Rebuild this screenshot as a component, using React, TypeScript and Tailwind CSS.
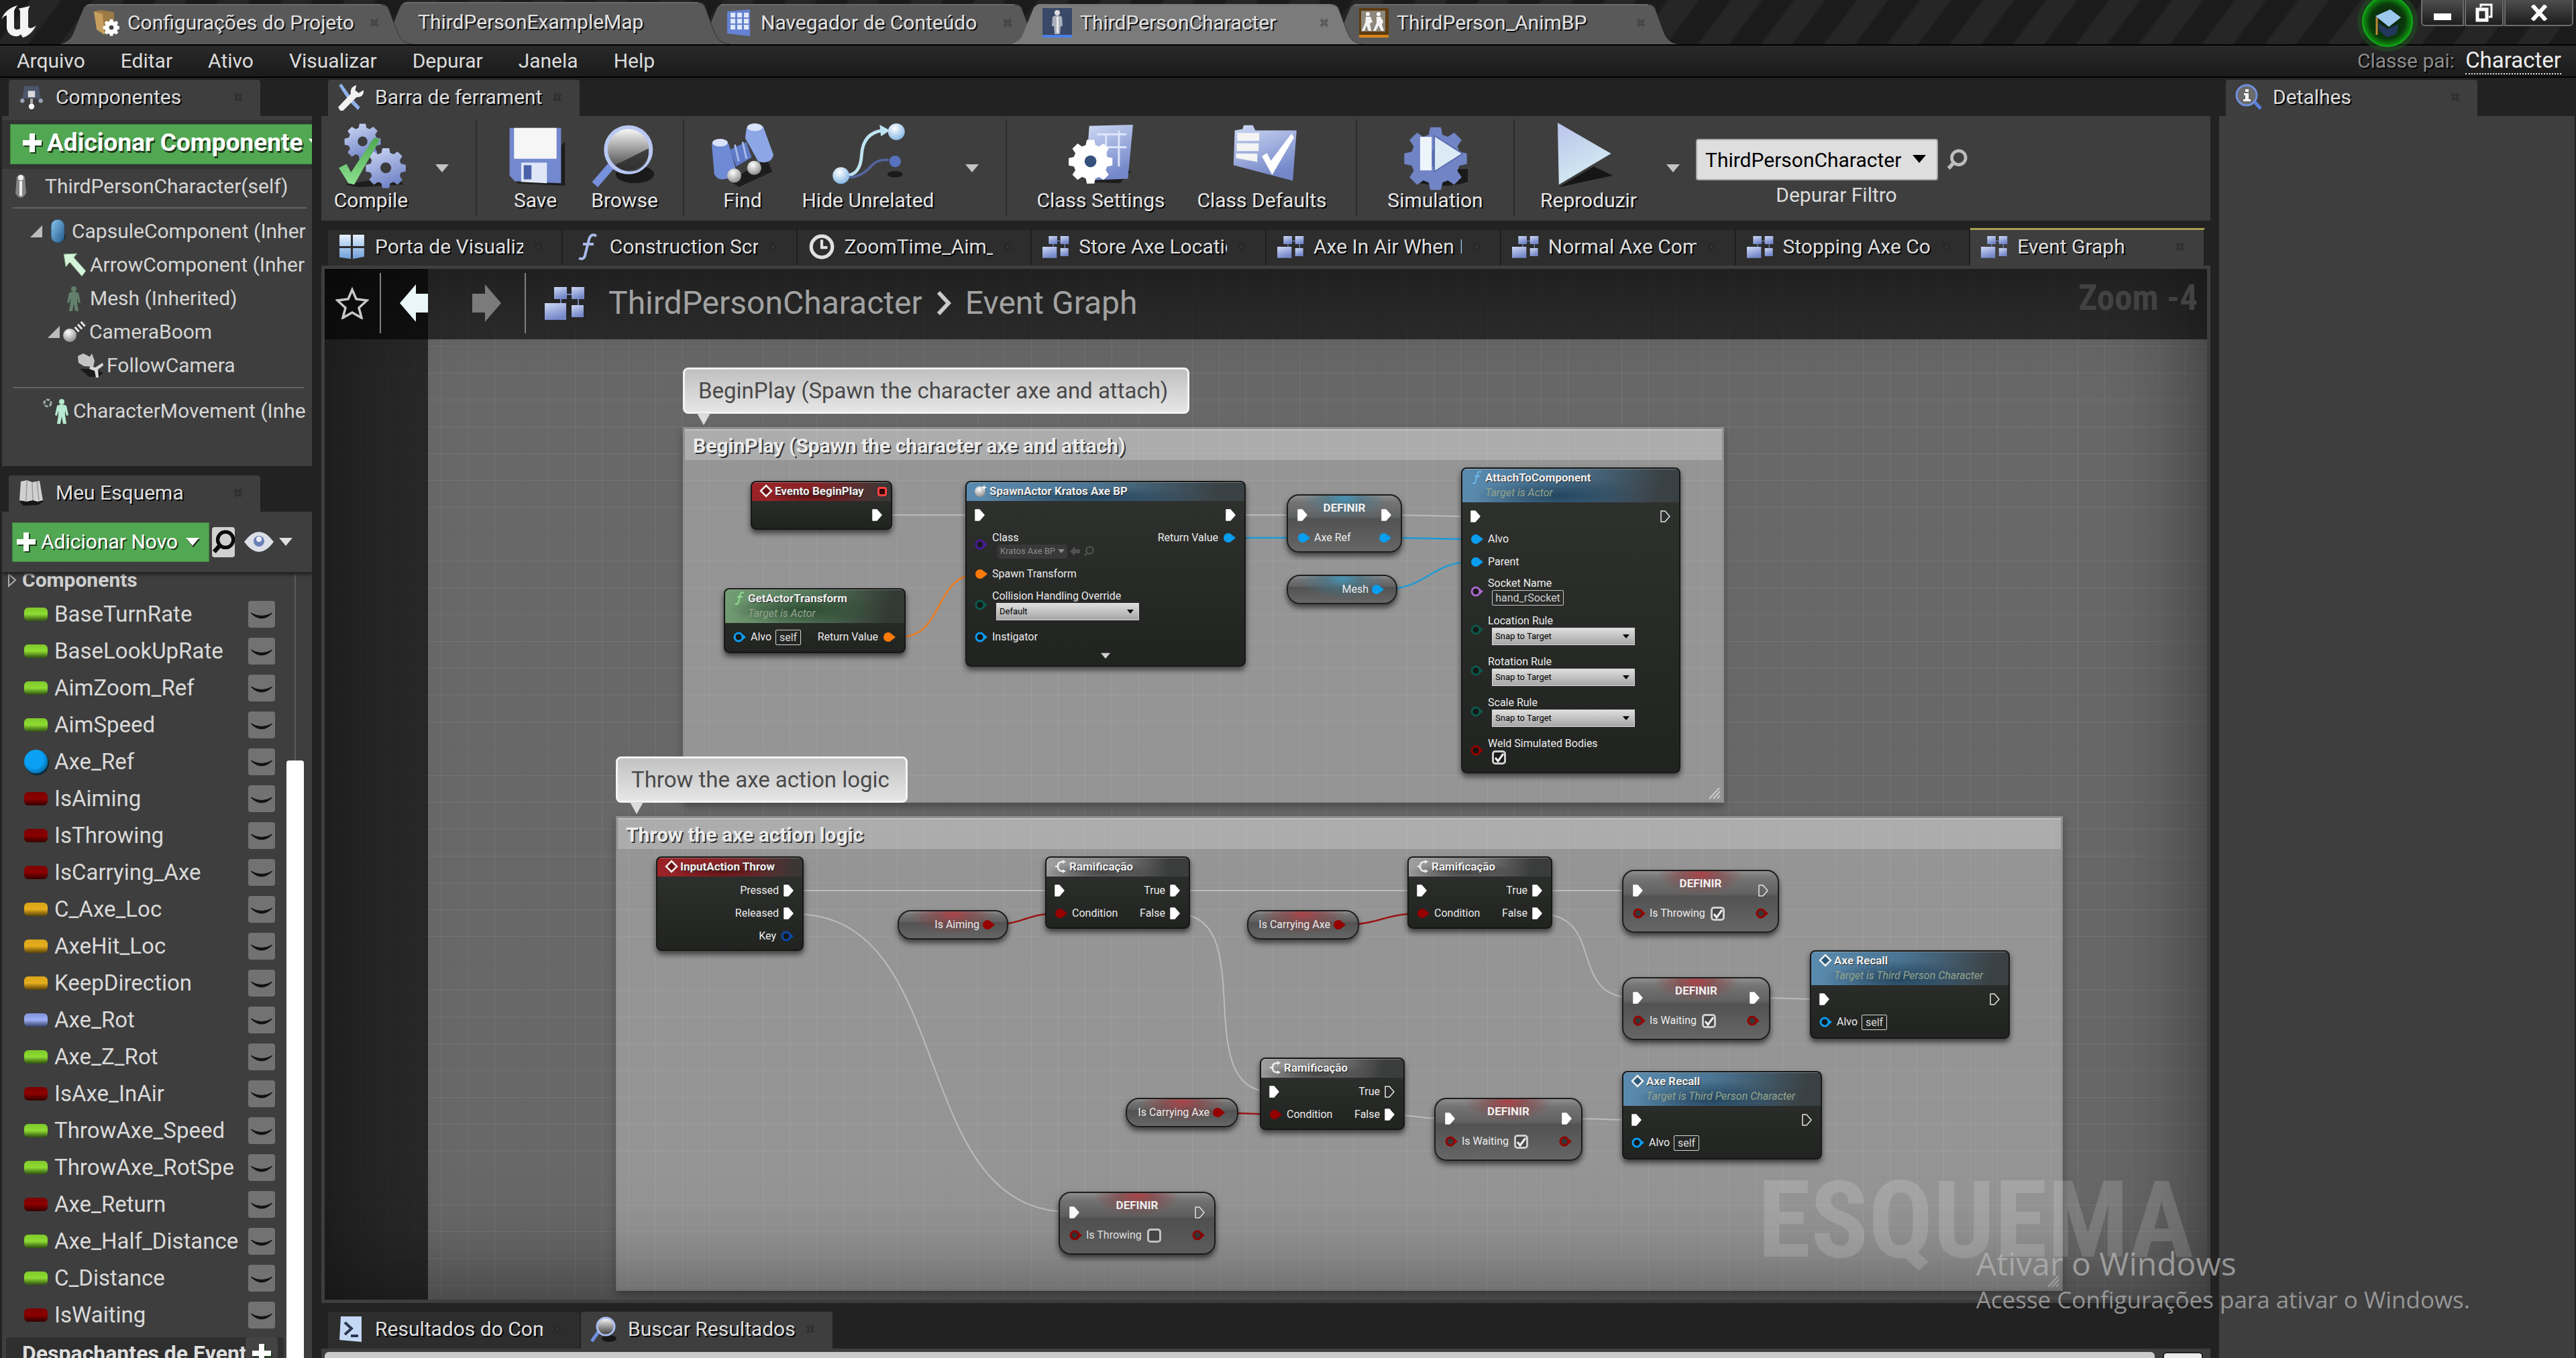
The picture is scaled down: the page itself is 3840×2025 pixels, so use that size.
import type { ReactNode } from "react";

/* ---------- shared gradients ---------- */

function Defs() {
  return (
    <svg className="absolute h-0 w-0" aria-hidden="true">
      <defs>
        <linearGradient id="steel" x1="0" y1="0" x2="0.4" y2="1">
          <stop offset="0" stopColor="#cfdaf5" />
          <stop offset="1" stopColor="#7487c9" />
        </linearGradient>
        <linearGradient id="pale" x1="0" y1="0" x2="0.4" y2="1">
          <stop offset="0" stopColor="#b9c3ea" />
          <stop offset="1" stopColor="#d5ecf3" />
        </linearGradient>
        <linearGradient id="leaf" x1="0" y1="0" x2="0" y2="1">
          <stop offset="0" stopColor="#4fa84f" />
          <stop offset="1" stopColor="#8be08f" />
        </linearGradient>
        <linearGradient id="chrome" x1="0" y1="0" x2="0" y2="1">
          <stop offset="0" stopColor="#ffffff" />
          <stop offset="0.5" stopColor="#9a9a9a" />
          <stop offset="1" stopColor="#3a3a3a" />
        </linearGradient>
        <linearGradient id="capsule" x1="0" y1="0" x2="1" y2="1">
          <stop offset="0" stopColor="#8cc7f0" />
          <stop offset="1" stopColor="#1f5a8c" />
        </linearGradient>
        <linearGradient id="window" x1="0" y1="0" x2="0" y2="1">
          <stop offset="0" stopColor="#e6f2ff" />
          <stop offset="1" stopColor="#6f9fd8" />
        </linearGradient>
        <radialGradient id="ball" cx="0.4" cy="0.3" r="0.8">
          <stop offset="0" stopColor="#ffffff" />
          <stop offset="1" stopColor="#77aee0" />
        </radialGradient>
        <radialGradient id="greyball" cx="0.4" cy="0.3" r="0.8">
          <stop offset="0" stopColor="#ffffff" />
          <stop offset="1" stopColor="#7f7f7f" />
        </radialGradient>
        <radialGradient id="glow" cx="0.5" cy="0.5" r="0.5">
          <stop offset="0" stopColor="#0c1f0c" />
          <stop offset="0.7" stopColor="#0b3a0b" />
          <stop offset="1" stopColor="#0f9a12" />
        </radialGradient>
      </defs>
    </svg>
  );
}

/* ---------- small icons ---------- */

type IconProps = { className?: string };

const gearPath =
  "M-5-24h10l1.500 7 5 2 6-4 7 7-4 6 2 5 7 1.500v10l-7 1.500-2 5 4 6-7 7-6-4-5 2-1.500 7h-10l-1.500-7-5-2-6 4-7-7 4-6-2-5-7-1.500v-10l7-1.500 2-5-4-6 7-7 6 4 5-2z";

function Gear({ x, y, s, fill, hole = "#3c3c3c" }: { x: number; y: number; s: number; fill: string; hole?: string }) {
  return (
    <g transform={`translate(${x} ${y}) scale(${s})`}>
      <path d={gearPath} fill={fill} transform="translate(0 -5)" />
      <circle cx="0" cy="0" r="8" fill={hole} />
    </g>
  );
}

function Cross({ className = "" }: IconProps) {
  return (
    <svg viewBox="0 0 16 16" className={`h-4 w-4 shrink-0 ${className}`} aria-hidden="true">
      <path d="M3 3l10 10M13 3L3 13" stroke="#1b1b1b" strokeWidth="4" />
      <path d="M3 3l10 10M13 3L3 13" stroke="#585858" strokeWidth="1" />
    </svg>
  );
}

function Down({ className = "" }: IconProps) {
  return (
    <svg viewBox="0 0 20 12" className={`shrink-0 ${className}`} aria-hidden="true">
      <path d="M0 0h20L10 12z" fill="currentColor" />
    </svg>
  );
}

function GraphIcon({ className = "h-9 w-10" }: IconProps) {
  return (
    <svg viewBox="0 0 60 50" className={`shrink-0 ${className}`} aria-hidden="true">
      <path d="M24 12h26M24 12v24M50 12v30" stroke="#7484bd" strokeWidth="2" />
      <rect x="14" y="1" width="19" height="18" fill="url(#steel)" />
      <rect x="40" y="1" width="19" height="18" fill="url(#steel)" />
      <rect x="0" y="25" width="32" height="25" fill="url(#steel)" />
      <rect x="40" y="28" width="18" height="18" fill="url(#steel)" />
    </svg>
  );
}

function FolderGear() {
  return (
    <svg viewBox="0 0 40 40" className="h-10 w-10 shrink-0" aria-hidden="true">
      <path d="M2 3l10-2 20 3v12l-16 22z" fill="#9b7a45" />
      <path d="M2 3l13 4 3 31L6 30z" fill="#c79e5d" />
      <Gear x={28} y={27} s={0.42} fill="#fff" hole="#444" />
    </svg>
  );
}

function GridIcon() {
  return (
    <svg viewBox="0 0 40 40" className="h-10 w-10 shrink-0" aria-hidden="true">
      <path d="M2 3l34-3v40L2 36z" fill="#6682d2" />
      {[5, 14, 23].map((y) =>
        [7, 17, 27].map((x) => <rect key={`${x}-${y}`} x={x} y={y} width="7" height="7" fill="#dfe7fb" />),
      )}
    </svg>
  );
}

function PersonTile() {
  return (
    <svg viewBox="0 0 44 44" className="h-11 w-11 shrink-0" aria-hidden="true">
      <rect width="44" height="44" fill="#3a4868" />
      <rect y="40" width="44" height="4" fill="#4a80e8" />
      <circle cx="22" cy="7" r="4" fill="#ddd" />
      <path d="M15 13q7-4 14 0l1 14h-3l-1 12h-8l-1-12h-3z" fill="#aab0bd" />
      <path d="M21 13h3v24h-3z" fill="#e8e8e8" />
    </svg>
  );
}

function AnimTile() {
  return (
    <svg viewBox="0 0 44 44" className="h-11 w-11 shrink-0" aria-hidden="true">
      <rect width="44" height="44" fill="#5d3c12" />
      <rect y="40" width="44" height="4" fill="#d8871a" />
      <rect x="3" y="4" width="36" height="31" fill="#8d877c" />
      <circle cx="13" cy="9" r="3" fill="#fff" />
      <circle cx="29" cy="9" r="3" fill="#fff" />
      <path d="M10 13h7l3 8-4 2 2 11h-4l-3-8-3 8H4l5-12zM26 13h6l4 7-2 5 3 9h-4l-4-8-4 8h-4l5-12z" fill="#f3f3f3" />
    </svg>
  );
}

function ComponentsIcon() {
  return (
    <svg viewBox="0 0 38 38" className="h-10 w-10 shrink-0" aria-hidden="true">
      <path d="M9 3h20l3 18H6z" fill="#4c566c" />
      <rect x="14" y="10" width="10" height="9" fill="#d9d9d9" />
      <circle cx="6" cy="24" r="3" fill="#9ba5b8" />
      <circle cx="32" cy="24" r="3" fill="#9ba5b8" />
      <path d="M17 21h4v7h-4z" fill="#aaa" />
      <circle cx="19" cy="32" r="4" fill="#fff" />
    </svg>
  );
}

function ToolsIcon() {
  return (
    <svg viewBox="0 0 38 38" className="h-10 w-10 shrink-0" aria-hidden="true">
      <path d="M2 2l4-2 14 20 12 13-3 4L16 24z" fill="#8fb0ea" />
      <path d="M4 38l-3-5 18-19q-2-9 8-12l-2 7 5 4 7-4q1 10-10 10L8 38z" fill="#f2f2f2" />
    </svg>
  );
}

function InfoLens() {
  return (
    <svg viewBox="0 0 40 40" className="h-10 w-10 shrink-0" aria-hidden="true">
      <path d="M28 26l10 11" stroke="#5d7fdc" strokeWidth="5" />
      <circle cx="17" cy="17" r="15" fill="#6a6a6a" stroke="#7090de" strokeWidth="3" />
      <path d="M15 8h5v4h-5zM13 14h7v9h3v3H12v-3h3v-6h-2z" fill="#f4f4f4" />
    </svg>
  );
}

function BookIcon() {
  return (
    <svg viewBox="0 0 40 40" className="h-10 w-10 shrink-0" aria-hidden="true">
      <path d="M2 33l6 6 22-1 8-6-8-4z" fill="#151515" />
      <path d="M4 3l9-2 8 3 11-2 5 29-8 2-7-2-9 2-11-2z" fill="#d0d0d0" />
      <path d="M13 1l-1 31M21 4l1 27M28 3l3 28" stroke="#9a9a9a" strokeWidth="1.500" />
    </svg>
  );
}

function ViewportIcon() {
  return (
    <svg viewBox="0 0 38 38" className="h-10 w-10 shrink-0" aria-hidden="true">
      <path d="M1 2h16v16H1zM20 2h16v16H20zM1 21h16v15L1 34zM20 21h16v12l-16 3z" fill="url(#window)" />
    </svg>
  );
}

function ScriptF({ className = "h-10 w-9", color = "#a9b9ea" }: IconProps & { color?: string }) {
  return (
    <svg viewBox="0 0 36 40" className={`shrink-0 ${className}`} aria-hidden="true">
      <path d="M32 4q-8-5-11 5l-6 24q-2 7-9 4M12 16h16" fill="none" stroke={color} strokeWidth="4" />
    </svg>
  );
}

function ClockIcon() {
  return (
    <svg viewBox="0 0 38 38" className="h-10 w-10 shrink-0" aria-hidden="true">
      <circle cx="19" cy="19" r="15" fill="none" stroke="#e0e0e0" strokeWidth="5" />
      <path d="M19 9v11h8" fill="none" stroke="#e0e0e0" strokeWidth="4" />
    </svg>
  );
}

function LensIcon({ className = "h-10 w-10" }: IconProps) {
  return (
    <svg viewBox="0 0 40 40" className={`shrink-0 ${className}`} aria-hidden="true">
      <ellipse cx="28" cy="34" rx="11" ry="5" fill="#161616" />
      <path d="M12 24L2 38" stroke="#6f8fdc" strokeWidth="5" />
      <circle cx="23" cy="16" r="13" fill="url(#chrome)" stroke="#a9bdf0" strokeWidth="3" />
    </svg>
  );
}

function ConsoleIcon() {
  return (
    <svg viewBox="0 0 38 40" className="h-10 w-10 shrink-0" aria-hidden="true">
      <path d="M4 1h31v38L2 36z" fill="#c3d8f5" />
      <path d="M10 10l10 9-10 9M19 30h11" fill="none" stroke="#2b3550" strokeWidth="4" />
    </svg>
  );
}

function SearchGlyph({ className = "", stroke = "#bdbdbd" }: IconProps & { stroke?: string }) {
  return (
    <svg viewBox="0 0 32 34" className={`shrink-0 ${className}`} aria-hidden="true">
      <circle cx="19" cy="14" r="11" fill="none" stroke={stroke} strokeWidth="5" />
      <path d="M11 22L3 31" stroke={stroke} strokeWidth="6" />
    </svg>
  );
}

function Plus({ className = "" }: IconProps) {
  return (
    <svg viewBox="0 0 28 28" className={`shrink-0 drop-shadow-[2px_2px_0_#1d3d1d] ${className}`} aria-hidden="true">
      <path d="M10 0h8v10h10v8H18v10h-8V18H0v-8h10z" fill="#fff" />
    </svg>
  );
}

/* ---------- window frame ---------- */

type WindowTab = { title: string; icon?: ReactNode; active?: boolean; layer: string; lifted?: boolean };

const windowTabs: WindowTab[] = [
  { title: "Configurações do Projeto", icon: <FolderGear />, layer: "z-40" },
  { title: "ThirdPersonExampleMap", layer: "z-30", lifted: true },
  { title: "Navegador de Conteúdo", icon: <GridIcon />, layer: "z-20" },
  { title: "ThirdPersonCharacter", icon: <PersonTile />, layer: "z-50", active: true },
  { title: "ThirdPerson_AnimBP", icon: <AnimTile />, layer: "z-10" },
];

function WindowTabItem({ tab }: { tab: WindowTab }) {
  return (
    <div className={`relative flex w-[472px] shrink-0 items-center pb-1 ${tab.lifted ? "h-[63px]" : "h-[60px]"} ${tab.layer}`}>
      <svg viewBox="0 0 526 60" preserveAspectRatio="none" className="absolute top-0 left-0 h-full w-[526px]" aria-hidden="true">
        <path
          d="M0 60C16 56 19 46 24 32L34 8Q37 0 46 0H478Q487 0 490 8L500 36C506 52 510 58 526 60Z"
          fill={tab.active ? "#7b7b7b" : "#595959"}
        />
        <path d="M46 1H478Q487 1 490 9L500 36C506 52 510 58 526 60" fill="none" stroke="#00000066" strokeWidth="1" />
        <path d="M40 2Q42 1 46 1H478" fill="none" stroke="#8d8d8d" strokeWidth="1" />
      </svg>
      <button
        className={`relative flex flex-1 items-center gap-3 text-[30px] leading-10 whitespace-nowrap text-[#e2e2e2] [text-shadow:2px_2px_0_#111] ${
          tab.icon ? "pl-[48px]" : "pl-[61px]"
        }`}
      >
        {tab.icon}
        <span>{tab.title}</span>
      </button>
      {tab.icon && <Cross className="relative -right-1 opacity-40" />}
    </div>
  );
}

function UnrealLogo() {
  return (
    <svg viewBox="0 0 60 50" className="h-[50px] w-[60px]" aria-hidden="true">
      <path
        d="M2 22Q8 6 26 1Q20 8 21 12V34Q22 39 30 36V12Q30 6 27 6Q36 4 45 2Q42 5 42 9V33Q44 38 54 31Q46 46 34 49L31 44Q26 50 16 45Q9 40 10 30V16Q6 16 2 22Z"
        fill="#f4f4f4"
      />
    </svg>
  );
}

function WindowControls() {
  const base = "flex h-[39px] items-center justify-center border-2 border-t-0 border-[#6b6b6b] bg-linear-to-b from-[#4e4e4e] to-[#1e1e1e]";
  return (
    <div className="flex gap-px">
      <button aria-label="Minimizar" className={`${base} w-16 rounded-bl-md`}>
        <svg viewBox="0 0 26 10" className="mt-3 h-2.5 w-[26px]"><rect width="26" height="10" fill="#fff" /></svg>
      </button>
      <button aria-label="Restaurar" className={`${base} w-[58px]`}>
        <svg viewBox="0 0 26 28" className="h-7 w-[26px]" fill="none" stroke="#fff">
          <path d="M8 6V2h16v18h-4" strokeWidth="3" />
          <rect x="3" y="9" width="14" height="16" strokeWidth="5" />
        </svg>
      </button>
      <button aria-label="Fechar" className={`${base} w-[103px] rounded-br-md`}>
        <svg viewBox="0 0 28 24" className="h-6 w-7"><path d="M4 1l20 22M24 1L4 23" stroke="#fff" strokeWidth="6" /></svg>
      </button>
    </div>
  );
}

function TitleBar() {
  return (
    <header className="relative z-20 flex h-[66px] bg-[repeating-linear-gradient(127deg,#1b1b1b_0px,#1b1b1b_34px,#262626_38px,#262626_71px,#1b1b1b_75px)]">
      <div className="w-[90px] shrink-0 pt-[7px]"><UnrealLogo /></div>
      <nav className="flex items-end">
        {windowTabs.map((t) => <WindowTabItem key={t.title} tab={t} />)}
      </nav>
      <div className="ml-auto flex items-start gap-1 pr-1">
        <button aria-label="Tutoriais" className="-mt-3.5">
          <svg viewBox="0 0 92 92" className="h-[92px] w-[92px]">
            <circle cx="46" cy="46" r="45" fill="#1d5a20" opacity="0.45" />
            <circle cx="46" cy="46" r="37" fill="url(#glow)" stroke="#12a818" strokeWidth="2" />
            <path d="M32 48l14 9 16-7-2 14-14 6-12-10z" fill="#22375c" />
            <path d="M28 38l22-10 16 12-18 14z" fill="#9cc8ee" />
            <path d="M30 40v26" stroke="#c08a3a" strokeWidth="3" />
          </svg>
        </button>
        <WindowControls />
      </div>
    </header>
  );
}

function MenuBar() {
  return (
    <div className="flex h-[50px] items-center border-y-2 border-black bg-linear-to-b from-[#292929] to-[#1b1b1b] pr-[22px] pl-[25px] text-[30px] leading-10">
      <nav className="flex gap-[53px]">
        {["Arquivo", "Editar", "Ativo", "Visualizar", "Depurar", "Janela", "Help"].map((m) => (
          <button key={m} className="text-[#dcdcdc]">{m}</button>
        ))}
      </nav>
      <div className="ml-auto flex items-center gap-4">
        <span className="text-[#8b8b8b] [text-shadow:2px_2px_0_#000]">Classe pai:</span>
        <a href="#character" className="border-b-2 border-dotted border-[#e0e0e0] text-[33px] leading-[38px] text-[#ededed]">Character</a>
      </div>
    </div>
  );
}

/* ---------- dock tabs ---------- */

function PanelTab({ icon, title }: { icon: ReactNode; title: string }) {
  return (
    <div className="ml-2.5 flex h-[54px] w-[375px] shrink-0 items-center rounded-t bg-[#3e3e3e] pb-0.5 pl-3.5">
      {icon}
      <span className="ml-4 w-[250px] overflow-hidden text-[30px] leading-10 whitespace-nowrap text-[#dedede] [text-shadow:2px_2px_0_#000]">{title}</span>
      <Cross className="ml-3.5 opacity-60" />
    </div>
  );
}

/* ---------- component tree ---------- */

function Expander() {
  return (
    <svg viewBox="0 0 18 18" className="h-[18px] w-[18px] shrink-0" aria-hidden="true"><path d="M18 0v18H0z" fill="#bcbcbc" /></svg>
  );
}

function Figure({ fill }: { fill: string }) {
  return (
    <svg viewBox="0 0 26 38" className="h-[38px] w-[26px] shrink-0" aria-hidden="true">
      <circle cx="13" cy="5" r="4" fill={fill} />
      <path d="M6 11q7-4 14 0l3 14-3 1-2-8v7l2 13h-5l-2-11-2 11H6l2-13v-7l-2 8-3-1z" fill={fill} />
    </svg>
  );
}

type TreeRow = { name: string; pad: string; expand?: boolean; icon: ReactNode };

const treeRows: TreeRow[] = [
  {
    name: "CapsuleComponent (Inherited)", pad: "pl-[42px]", expand: true,
    icon: (
      <svg viewBox="0 0 40 38" className="h-[38px] w-10 shrink-0" aria-hidden="true">
        <path d="M18 36q18-2 17-12l-10 2z" fill="#1c1c1c" />
        <rect x="13" y="1" width="20" height="35" rx="10" fill="url(#capsule)" stroke="#2c4d66" />
      </svg>
    ),
  },
  {
    name: "ArrowComponent (Inherited)", pad: "pl-[87px]",
    icon: (
      <svg viewBox="0 0 40 38" className="h-[38px] w-10 shrink-0" aria-hidden="true">
        <path d="M5 3l20-1-5 6 18 20-6 8-18-21-6 7z" fill="#d5f5da" stroke="#7a9a80" />
      </svg>
    ),
  },
  { name: "Mesh (Inherited)", pad: "pl-[94px] gap-x-[7px]", icon: <Figure fill="#62806c" /> },
  {
    name: "CameraBoom", pad: "pl-[68px]", expand: true,
    icon: (
      <svg viewBox="0 0 40 38" className="h-[38px] w-10 shrink-0" aria-hidden="true">
        <path d="M20 20L38 4" stroke="#e4e4e4" strokeWidth="9" strokeDasharray="3 3" />
        <circle cx="15" cy="24" r="10" fill="url(#greyball)" />
      </svg>
    ),
  },
  {
    name: "FollowCamera", pad: "pl-28",
    icon: (
      <svg viewBox="0 0 40 38" className="h-[38px] w-10 shrink-0" aria-hidden="true">
        <path d="M4 24l14 12h14l7-6-14-6z" fill="#1a1a1a" />
        <path d="M1 5l8-4 10 5 3-5 4 11-2 9-14-1L2 15z" fill="#c4c4c4" />
        <path d="M20 20l7 2 11-7 1 4-8 6 1 12h-4l-2-10-8-3z" fill="#dadada" />
      </svg>
    ),
  },
];

const rowText = "text-[30px] leading-10 whitespace-nowrap text-[#d6d6d6]";

function ComponentsPanel() {
  return (
    <section className="flex flex-col">
      <PanelTab icon={<ComponentsIcon />} title="Componentes" />
      <div className="h-[522px] overflow-hidden bg-[#3e3e3e] pt-1.5">
        <div className="h-[73px] overflow-hidden bg-[#333] pt-1.5 pl-3">
          <button className="flex h-[60px] w-[520px] items-center border border-[#3d8a3d] bg-[#52a852] pb-1 pl-[18px] text-[37px] leading-10 font-bold whitespace-nowrap text-white [text-shadow:2px_3px_0_#1d3d1d]">
            <Plus className="mr-2 h-7 w-7" />
            Adicionar Componente
            <Down className="ml-2 h-3 w-5" />
          </button>
        </div>
        <div className="mr-2 ml-4 flex h-[59px] items-center overflow-hidden border-b-2 border-[#636363] pb-1.5">
          <svg viewBox="0 0 24 40" className="mr-6 h-10 w-6 shrink-0" aria-hidden="true">
            <path d="M6 6q6-8 12 0l2 24q-8 14-16 0z" fill="#868686" />
            <circle cx="12" cy="7" r="4" fill="#eee" />
            <path d="M10 12h4v22h-4z" fill="#eee" />
          </svg>
          <span className={rowText}>ThirdPersonCharacter(self)</span>
        </div>
        <ul className="pt-[9px] pr-[9px] pb-[7px]">
          {treeRows.map((r) => (
            <li key={r.name} className={`flex h-[50px] items-center overflow-hidden ${r.pad}`}>
              {r.expand && <Expander />}
              {r.icon}
              <span className={`ml-1 ${rowText} overflow-hidden`}>{r.name}</span>
            </li>
          ))}
        </ul>
        <div className="mr-3 ml-4 border-t-2 border-[#636363]" />
        <div className="mr-[9px] flex h-[68px] items-center overflow-hidden pl-[60px]">
          <svg viewBox="0 0 16 20" className="mb-6 h-5 w-4 shrink-0" aria-hidden="true">
            <circle cx="8" cy="10" r="5" fill="none" stroke="#9ab0a2" strokeWidth="3" strokeDasharray="5 2" />
          </svg>
          <Figure fill="#b7ead0" />
          <span className={`ml-1 ${rowText}`}>CharacterMovement (Inherited)</span>
        </div>
      </div>
    </section>
  );
}

/* ---------- my blueprint ---------- */

type VarKind = "float" | "object" | "bool" | "vector" | "rotator";

const variables: [string, VarKind][] = [
  ["BaseTurnRate", "float"], ["BaseLookUpRate", "float"], ["AimZoom_Ref", "float"], ["AimSpeed", "float"],
  ["Axe_Ref", "object"], ["IsAiming", "bool"], ["IsThrowing", "bool"], ["IsCarrying_Axe", "bool"],
  ["C_Axe_Loc", "vector"], ["AxeHit_Loc", "vector"], ["KeepDirection", "vector"], ["Axe_Rot", "rotator"],
  ["Axe_Z_Rot", "float"], ["IsAxe_InAir", "bool"], ["ThrowAxe_Speed", "float"], ["ThrowAxe_RotSpe", "float"],
  ["Axe_Return", "bool"], ["Axe_Half_Distance", "float"], ["C_Distance", "float"], ["IsWaiting", "bool"],
];

const varStyle: Record<VarKind, string> = {
  float: "h-5 rounded-md bg-linear-to-b from-[#7fc92a] via-[#8fdc33] to-[#2f5210]",
  bool: "h-5 rounded-md bg-linear-to-b from-[#7d0000] via-[#8c0000] to-[#340000]",
  vector: "h-5 rounded-md bg-linear-to-b from-[#dba51a] via-[#e6ae1c] to-[#5a4208]",
  rotator: "h-5 rounded-md bg-linear-to-b from-[#8091d8] via-[#9db0f5] to-[#363f68]",
  object: "h-[35px] rounded-full bg-[#0aa1f5] shadow-[inset_-3px_-4px_4px_#0878b8,2px_3px_2px_#0a2a3c]",
};

function MyBlueprint() {
  return (
    <section className="flex min-h-0 flex-1 flex-col">
      <PanelTab icon={<BookIcon />} title="Meu Esquema" />
      <div className="flex min-h-0 flex-1 flex-col overflow-hidden bg-[#3e3e3e]">
        <div className="z-10 flex h-[90px] shrink-0 items-center pl-[15px] shadow-[0_4px_4px_#222]">
          <button className="flex h-[59px] w-[294px] items-center border border-[#3d8a3d] bg-[#52a852] pl-1.5 text-[30px] leading-10 whitespace-nowrap text-white [text-shadow:2px_2px_0_#1d3d1d]">
            <Plus className="mr-2 h-7 w-7" />
            Adicionar Novo
            <Down className="ml-3 h-3.5 w-5 drop-shadow-[1px_2px_0_#111]" />
          </button>
          <button aria-label="Pesquisar" className="ml-1 flex h-[45px] w-[34px] items-center justify-center rounded-sm bg-[#d0d0d0]">
            <SearchGlyph className="h-9 w-[34px]" stroke="#0a0a0a" />
          </button>
          <button aria-label="Opções de exibição" className="ml-3.5 flex items-center gap-2 text-[#dedede]">
            <svg viewBox="0 0 44 32" className="h-8 w-11">
              <path d="M0 16Q22-14 44 16Q22 46 0 16z" fill="#dcdfe8" />
              <circle cx="22" cy="15" r="8" fill="#6a82b8" />
              <circle cx="22" cy="12" r="4" fill="#e8eef8" />
            </svg>
            <Down className="h-3.5 w-5" />
          </button>
        </div>
        <div className="flex min-h-0 flex-1">
          <div className="w-[420px] overflow-hidden">
            <h3 className="flex h-9 items-center pb-3 text-[30px] leading-9 font-bold text-[#cfcfcf]">
              <svg viewBox="0 0 14 22" className="mr-2 ml-2 h-[22px] w-3.5"><path d="M2 2v18l10-9z" fill="none" stroke="#aaa" strokeWidth="2" /></svg>
              Components
            </h3>
            <ul className="-mt-px">
              {variables.map(([name, kind]) => (
                <li key={name} className="flex h-[55px] items-center pl-[33px]">
                  <span className={`w-[35px] shrink-0 ${varStyle[kind]}`} />
                  <span className="ml-2.5 w-[289px] overflow-hidden text-[33px] leading-10 whitespace-nowrap text-[#dadada]">{name}</span>
                  <button aria-label={`Visibilidade de ${name}`} className="h-10 w-10 rounded bg-[#727272]">
                    <svg viewBox="0 0 40 40" className="h-10 w-10"><path d="M4 18Q20 34 36 18Q20 27 4 18z" fill="#111" stroke="#111" strokeWidth="1" /></svg>
                  </button>
                </li>
              ))}
            </ul>
            <div className="mt-1.5 ml-1.5 flex h-12 items-center rounded-t bg-[#2f2f2f] pl-6 text-[32px] leading-10 font-bold text-[#dedede]">
              <span className="w-[333px] overflow-hidden whitespace-nowrap">Despachantes de Eventos</span>
              <button aria-label="Adicionar despachante" className="flex h-12 w-12 items-center justify-center rounded bg-[#434343]"><Plus className="h-7 w-7" /></button>
            </div>
          </div>
          <div className="ml-1 flex w-[26px] flex-col items-center">
            <div className="mt-1 h-[277px] w-0.5 bg-[#5c5c5c]" />
            <div className="w-full flex-1 rounded-t bg-white" />
          </div>
        </div>
      </div>
    </section>
  );
}

/* ---------- toolbar ---------- */

function Tool({ label, width, children }: { label: string; width: string; children: ReactNode }) {
  return (
    <button className={`flex shrink-0 flex-col items-center ${width}`}>
      <svg viewBox="0 0 100 100" className="h-24 w-24 overflow-visible" aria-hidden="true">{children}</svg>
      <span className="text-[30px] leading-10 whitespace-nowrap text-[#e6e6e6] [text-shadow:2px_2px_0_#000]">{label}</span>
    </button>
  );
}

function ToolArrow({ label, width }: { label: string; width: string }) {
  return (
    <button aria-label={label} className={`flex shrink-0 justify-center pt-[62px] text-[#c4c4c4] ${width}`}><Down className="h-3 w-5" /></button>
  );
}

const toolGroup = "flex h-[145px] shrink-0 border-r-2 border-[#2b2b2b] pt-[5px]";

function Toolbar() {
  return (
    <div className="flex h-[156px] overflow-hidden bg-[#3e3e3e] pt-[5px]">
      <div className={`${toolGroup} w-[232px]`}>
        <Tool label="Compile" width="w-[148px]">
          <path d="M10 96l20 4 70-4-10-14z" fill="#1d1d1d" />
          <Gear x={37} y={29} s={0.95} fill="url(#steel)" />
          <Gear x={73} y={70} s={1.05} fill="url(#steel)" />
          <path d="M0 70l12-6 7 13 36-54 9 3-40 70-9-2z" fill="url(#leaf)" />
        </Tool>
        <ToolArrow label="Opções de compilação" width="w-16" />
      </div>
      <div className={`${toolGroup} w-[309px] justify-center`}>
        <Tool label="Save" width="w-[133px]">
          <path d="M20 94l76 4V30z" fill="#1d1d1d" />
          <path d="M10 8h80v86l-72-3-8-9z" fill="#7288cf" />
          <path d="M17 8h66v48H17z" fill="#f6f6f6" />
          <path d="M28 62h40v32l-40-2z" fill="#dfe6f7" />
          <path d="M32 66h12v22H32z" fill="#4a60a8" />
        </Tool>
        <Tool label="Browse" width="w-[133px]">
          <ellipse cx="66" cy="80" rx="30" ry="14" fill="#1a1a1a" />
          <path d="M30 66L4 96" stroke="#7790dc" strokeWidth="12" />
          <circle cx="56" cy="42" r="35" fill="url(#chrome)" stroke="#b9c8f2" strokeWidth="6" />
          <path d="M35 66q20-10 52-26q3 24-18 34q-20 6-34-8z" fill="#2a2a2a" opacity="0.8" />
        </Tool>
      </div>
      <div className={`${toolGroup} w-[481px]`}>
        <Tool label="Find" width="w-[174px]">
          <path d="M30 90l14 10 52-24-8-20z" fill="#1d1d1d" />
          <path d="M2 32q6-6 26 0l12 42-12 12q-16 6-22-6z" fill="#6f8bd6" />
          <path d="M56 8q12-10 26-2l16 44q-4 16-24 10L54 24z" fill="#8ca6e6" />
          <path d="M30 42l26-12 8 24-24 14z" fill="#5f7ac6" />
          <path d="M38 34l6 26M50 30l6 26" stroke="#a9baea" strokeWidth="3" />
          <ellipse cx="15" cy="31" rx="12" ry="6" fill="#d9e2fb" />
          <ellipse cx="69" cy="7" rx="12" ry="6" fill="#d9e2fb" />
          <circle cx="37" cy="82" r="11" fill="url(#greyball)" />
          <circle cx="68" cy="70" r="11" fill="url(#greyball)" />
        </Tool>
        <Tool label="Hide Unrelated" width="w-[200px]">
          <ellipse cx="92" cy="80" rx="12" ry="5" fill="#1a1a1a" />
          <path d="M12 82q26 2 28-32q2-34 32-38" fill="none" stroke="#bfe4f2" strokeWidth="5" />
          <path d="M12 84q26 4 44-18q10-10 26-8" fill="none" stroke="#53659c" strokeWidth="4" />
          <path d="M68 3l16 9-14 9z" fill="#bfe4f2" />
          <circle cx="8" cy="82" r="13" fill="url(#ball)" />
          <circle cx="94" cy="14" r="13" fill="url(#ball)" />
          <circle cx="92" cy="60" r="9" fill="#5872c0" />
        </Tool>
        <ToolArrow label="Opções de ocultação" width="w-[109px]" />
      </div>
      <div className={`${toolGroup} w-[522px] justify-center`}>
        <Tool label="Class Settings" width="w-60">
          <path d="M20 92l60 2 18-20z" fill="#1d1d1d" />
          <path d="M32 5l68-2-8 84-52 2-12-30z" fill="url(#steel)" />
          <path d="M44 18h46M42 38h48M58 18v50M78 12v56" stroke="#dde6fb" strokeWidth="3" />
          <Gear x={34} y={60} s={1.15} fill="#fff" hole="#34507c" />
        </Tool>
        <Tool label="Class Defaults" width="w-60">
          <path d="M8 12l12-2 2-6h14l4 8 64 0-6 78L6 66z" fill="url(#steel)" />
          <path d="M12 16h34v12H12zM11 32h34v12H11zM10 48h33v13l-33-6z" fill="#f4f4f4" />
          <path d="M50 52l8-5 6 12 32-42 4 6-34 58z" fill="#fff" />
        </Tool>
      </div>
      <div className={`${toolGroup} w-[235px] justify-center`}>
        <Tool label="Simulation" width="w-[200px]">
          <path d="M20 92q40 12 80 0v-20H40z" fill="#1a1a1a" />
          <Gear x={50} y={55} s={1.65} fill="#7184c6" hole="#5a6cae" />
          <path d="M26 22h18v52H26z" fill="#eef5fa" />
          <path d="M48 20l44 28-44 28z" fill="#dbeaf5" stroke="#5a6cae" strokeWidth="2" />
        </Tool>
      </div>
      <div className="flex shrink-0 pt-[5px]">
        <Tool label="Reproduzir" width="w-[220px]">
          <path d="M4 100l84-18-30-14z" fill="#161616" />
          <path d="M2 0l83 48L4 96z" fill="url(#pale)" />
        </Tool>
        <ToolArrow label="Opções de reprodução" width="w-8" />
      </div>
      <div className="ml-[18px] flex shrink-0 gap-3 pt-[29px]">
        <div className="flex w-[361px] flex-col items-center">
          <div className="relative w-full">
            <select id="debug-filter" className="h-[62px] w-full appearance-none rounded border-2 border-[#a8a8a8] bg-[#dedede] pl-3 text-[30px] text-black">
              <option>ThirdPersonCharacter</option>
            </select>
            <Down className="pointer-events-none absolute top-6 right-[18px] h-3 w-5 text-black" />
          </div>
          <label htmlFor="debug-filter" className="mt-0.5 pl-[58px] text-[30px] leading-10 text-[#dcdcdc]">Depurar Filtro</label>
        </div>
        <button aria-label="Localizar objeto" className="h-[62px]"><SearchGlyph className="h-8 w-8" /></button>
      </div>
    </div>
  );
}

/* ---------- graph tabs ---------- */

const graphTabs: { title: string; icon: ReactNode; active?: boolean }[] = [
  { title: "Porta de Visualização", icon: <ViewportIcon /> },
  { title: "Construction Script", icon: <ScriptF className="h-10 w-10" /> },
  { title: "ZoomTime_Aim_", icon: <ClockIcon /> },
  { title: "Store Axe Location", icon: <GraphIcon /> },
  { title: "Axe In Air When It", icon: <GraphIcon /> },
  { title: "Normal Axe Component", icon: <GraphIcon /> },
  { title: "Stopping Axe Co", icon: <GraphIcon /> },
  { title: "Event Graph", icon: <GraphIcon />, active: true },
];

function GraphTabs() {
  return (
    <div className="mt-[11px] flex h-14 shrink-0 pr-2 pl-2.5">
      {graphTabs.map((t) => (
        <div
          key={t.title}
          className={`flex min-w-0 flex-1 items-center border-t-[3px] border-r-2 border-r-[#1f1f1f] pb-1 pl-4 ${
            t.active ? "border-t-[#a79f4f] bg-[#3e3e3e]" : "border-t-transparent bg-[#2d2d2d] bg-clip-padding"
          }`}
        >
          {t.icon}
          <span className="ml-3.5 w-[221px] overflow-hidden text-[30px] leading-10 whitespace-nowrap text-[#dedede] [text-shadow:2px_2px_0_#000]">{t.title}</span>
          <Cross className="ml-3.5 opacity-60" />
        </div>
      ))}
    </div>
  );
}

/* ---------- graph nodes ---------- */

function Exec({ open = false }: { open?: boolean }) {
  return (
    <svg viewBox="0 0 15 18" className="h-[18px] w-[15px] shrink-0" aria-hidden="true">
      <path d="M1 1h6l7 8-7 8H1z" fill={open ? "none" : "#fff"} stroke={open ? "#e4e4e4" : "#fff"} strokeWidth="1.500" strokeLinejoin="round" />
    </svg>
  );
}

type PinColor = "blue" | "orange" | "red" | "teal" | "violet" | "purple" | "navy";

const pinColors: Record<PinColor, string> = {
  blue: "#0a9df0", orange: "#ff7a0a", red: "#950000", teal: "#0b5a4c", violet: "#4a1a9c", purple: "#a86ad0", navy: "#0a4aa8",
};

function Pin({ color, open = false }: { color: PinColor; open?: boolean }) {
  const c = pinColors[color];
  return (
    <svg viewBox="0 0 19 16" className="h-4 w-[19px] shrink-0" aria-hidden="true">
      <path d="M14 4l5 4-5 4z" fill={c} />
      <circle cx="8" cy="8" r="6" fill={open ? "#00000066" : c} stroke={c} strokeWidth={open ? 3 : 2} />
    </svg>
  );
}

const pinText = "text-[16px] leading-5 whitespace-nowrap text-[#ececec]";

function Row({ left, right, height = "h-[34px]" }: { left?: ReactNode; right?: ReactNode; height?: string }) {
  return (
    <div className={`flex justify-between pr-[13px] pl-3 ${height}`}>
      <div className="flex items-center gap-[7px]">{left}</div>
      <div className="flex h-[34px] items-center gap-[7px]">{right}</div>
    </div>
  );
}

type Tone = "red" | "blue" | "green" | "grey";

const headerTone: Record<Tone, string> = {
  red: "bg-[radial-gradient(ellipse_at_45%_70%,#5a1012_0%,transparent_45%),linear-gradient(100deg,#9c2226_0%,#862427_45%,#3a3636_95%)]",
  blue: "bg-[radial-gradient(ellipse_at_45%_80%,#24455e_0%,transparent_50%),linear-gradient(105deg,#5b8cb0_0%,#4a7492_45%,#3a4144_90%)]",
  green: "bg-[radial-gradient(ellipse_at_45%_60%,#2c4c32_0%,transparent_55%),linear-gradient(105deg,#749e74_0%,#54795a_45%,#333a34_90%)]",
  grey: "bg-[radial-gradient(ellipse_at_40%_80%,#454545_0%,transparent_50%),linear-gradient(100deg,#a0a0a0_0%,#808080_45%,#3b3d3c_85%)]",
};

const nodeShadow = "shadow-[0_5px_9px_rgba(0,0,0,0.6)]";

function Node({ place, tone, icon, title, subtitle, corner, children }: {
  place: string; tone: Tone; icon: ReactNode; title: string; subtitle?: string; corner?: ReactNode; children: ReactNode;
}) {
  return (
    <article className={`absolute overflow-hidden rounded-lg border-2 border-[#161716] bg-linear-to-b from-[#303230] to-[#212320] ${nodeShadow} ${place}`}>
      <header className={`flex border-t border-white/30 pl-2 ${subtitle ? "h-[50px]" : "h-7"} ${headerTone[tone]}`}>
        <span className="flex h-6 w-[26px] shrink-0 items-center justify-center">{icon}</span>
        <div className="min-w-0 flex-1 whitespace-nowrap">
          <h4 className="text-[17px] leading-6 font-bold text-[#efefef] [text-shadow:1px_1px_0_#222]">{title}</h4>
          {subtitle && <p className="text-[16px] leading-[22px] text-[#93a48c] italic">{subtitle}</p>}
        </div>
        {corner}
      </header>
      <div className="pt-1">{children}</div>
    </article>
  );
}

function EventGlyph({ fill = "#6b1012" }: { fill?: string }) {
  return (
    <svg viewBox="0 0 20 20" className="h-5 w-5" aria-hidden="true"><path d="M10 2l8 8-8 8-8-8z" fill={fill} stroke="#efefef" strokeWidth="2.500" /></svg>
  );
}

function BranchGlyph() {
  return (
    <svg viewBox="0 0 18 20" className="h-5 w-[18px]" aria-hidden="true">
      <path d="M14 3q-9-1-9 7t9 7M1 10h5" fill="none" stroke="#ececec" strokeWidth="2.500" />
      <path d="M12 0l5 3-5 3zM12 14l5 3-5 3z" fill="#ececec" />
    </svg>
  );
}

function SelfField({ label }: { label: string }) {
  return (
    <label className={`flex items-center gap-1.5 ${pinText}`}>
      {label}
      <input defaultValue="self" className="h-[23px] w-[38px] rounded-xs border border-[#d8d8d8] bg-transparent text-center text-[16px] text-[#dcdcdc]" />
    </label>
  );
}

function Field({ label, children }: { label: string; children: ReactNode }) {
  return (
    <label className={`flex flex-col ${pinText}`}>
      {label}
      <span className="pl-1.5">{children}</span>
    </label>
  );
}

function NodeSelect({ value }: { value: string }) {
  return (
    <span className="relative block w-[213px]">
      <select className="block h-[26px] w-full appearance-none border border-[#d6d6d6] bg-linear-to-b from-[#dedede] to-[#a6a6a6] pl-1 text-[13px] leading-5 text-black">
        <option>{value}</option>
      </select>
      <Down className="pointer-events-none absolute top-2.5 right-2 h-1.5 w-2.5 text-black" />
    </span>
  );
}

function Check({ checked = false }: { checked?: boolean }) {
  return (
    <span className="relative block h-[21px] w-[21px]">
      <input type="checkbox" defaultChecked={checked} className="peer block h-[21px] w-[21px] appearance-none rounded-[5px] border-[3px] border-[#cfcfcf] bg-black/20" />
      <svg viewBox="0 0 21 21" className="pointer-events-none absolute inset-0 hidden h-[21px] w-[21px] peer-checked:block" aria-hidden="true">
        <path d="M5 11l4 5 8-11" fill="none" stroke="#f0f0f0" strokeWidth="3" />
      </svg>
    </span>
  );
}

const glassBody = "border-2 border-[#1d1d1d]";

const glassTone = {
  red: "bg-[radial-gradient(ellipse_64px_30px_at_50%_4px,#a84448_0%,#8a4447b0_40%,transparent_100%),linear-gradient(180deg,#8e8e8e_0%,#747474_12%,#626060_38%,#525252_42%,#666666_100%)]",
  blue: "bg-[radial-gradient(ellipse_64px_30px_at_50%_4px,#4793b2_0%,#46768ab0_40%,transparent_100%),linear-gradient(180deg,#8e8e8e_0%,#747474_12%,#606264_38%,#525252_42%,#666666_100%)]",
};

function SetNode({ place, tone = "red", name, checked, next = true }: {
  place: string; tone?: "red" | "blue"; name: string; checked?: boolean; next?: boolean;
}) {
  return (
    <article className={`absolute rounded-[18px] ${glassBody} ${glassTone[tone]} ${nodeShadow} ${place}`}>
      <header className="flex h-[46px] items-start justify-between px-3.5">
        <span className="pt-5"><Exec /></span>
        <h4 className="pt-2 text-[17px] leading-5 font-bold text-[#f0f0f0]">DEFINIR</h4>
        <span className="pt-5"><Exec open={!next} /></span>
      </header>
      <div className="flex h-[34px] items-center justify-between px-3.5">
        <div className="flex items-center gap-1.5">
          <Pin color={tone} open={tone === "red"} />
          <label className={`flex items-center gap-2 ${pinText}`}>
            {name}
            {tone === "red" && <Check checked={checked} />}
          </label>
        </div>
        <Pin color={tone} open={tone === "red"} />
      </div>
    </article>
  );
}

function VarNode({ place, tone = "red", name }: { place: string; tone?: "red" | "blue"; name: string }) {
  return (
    <article className={`absolute flex h-[44px] items-center justify-end gap-1 rounded-[20px] pr-[18px] ${glassBody} ${glassTone[tone]} ${nodeShadow} ${place}`}>
      <span className={pinText}>{name}</span>
      <Pin color={tone} />
    </article>
  );
}

function Branch({ place, trueOpen = false }: { place: string; trueOpen?: boolean }) {
  return (
    <Node place={`h-[108px] w-[216px] ${place}`} tone="grey" icon={<BranchGlyph />} title="Ramificação">
      <Row left={<Exec />} right={<><span className={pinText}>True</span><Exec open={trueOpen} /></>} />
      <Row left={<><Pin color="red" /><span className={pinText}>Condition</span></>} right={<><span className={pinText}>False</span><Exec /></>} />
    </Node>
  );
}

function AxeRecall({ place }: { place: string }) {
  return (
    <Node place={`h-[132px] w-[298px] ${place}`} tone="blue" icon={<EventGlyph fill="#2c5877" />} title="Axe Recall" subtitle="Target is Third Person Character">
      <Row left={<Exec />} right={<Exec open />} />
      <Row left={<><Pin color="blue" open /><SelfField label="Alvo" /></>} />
    </Node>
  );
}

function Comment({ place, text }: { place: string; text: string }) {
  return (
    <section className={`absolute border-3 border-[#909090] bg-white/30 shadow-[0_6px_12px_rgba(0,0,0,0.3)] ${place}`}>
      <h3 className="h-[46px] border-t-2 border-[#c0c0c0] bg-white/22 pl-3 text-[30px] leading-[46px] font-bold whitespace-nowrap text-[#ececec] [text-shadow:2px_2px_0_#333]">{text}</h3>
      <svg viewBox="0 0 18 18" className="absolute right-0.5 bottom-0.5 h-[18px] w-[18px]" aria-hidden="true"><path d="M1 17L16 1M7 17L17 6M13 17l4-5" stroke="#ccc" strokeWidth="2" /></svg>
    </section>
  );
}

function Bubble({ place, text }: { place: string; text: string }) {
  return (
    <div className={`absolute flex h-[69px] items-center rounded-lg border-3 border-[#f4f4f4] bg-linear-to-b from-[#c2c2c2] to-[#e6e6e6] pl-5 text-[33px] leading-10 whitespace-nowrap text-[#4a4a4a] ${place}`}>
      {text}
      <svg viewBox="0 0 20 18" className="absolute top-[65px] left-[18px] h-[18px] w-5" aria-hidden="true"><path d="M0 0h20L10 18z" fill="#dcdcdc" /></svg>
    </div>
  );
}

function Wires() {
  const exec = [
    "M1314 768H1455", "M1840 768H1935", "M2075 768C2115 768 2155 770 2195 770", "M1183 1328H1572",
    "M1185 1363C1430 1363 1350 1807 1595 1807", "M1760 1328H2115", "M1755 1363C1880 1363 1770 1628 1895 1628",
    "M2300 1328H2435", "M2295 1363C2395 1363 2335 1488 2435 1488", "M2622 1488C2660 1488 2680 1490 2715 1490",
    "M2078 1663C2110 1663 2120 1668 2155 1668", "M2340 1668C2380 1668 2400 1670 2435 1670",
  ];
  return (
    <svg viewBox="0 0 3290 1938" className="absolute top-0 left-0 h-[1938px] w-[3290px]" fill="none" aria-hidden="true">
      {exec.map((d) => <path key={d} d={d} stroke="#bcbcbc" strokeWidth="2" />)}
      <g stroke="#1c9ad6" strokeWidth="2.500">
        <path d="M1840 802H1935" />
        <path d="M2070 802C2115 802 2155 804 2200 804" />
        <path d="M2060 879C2130 879 2130 837 2200 837" />
      </g>
      <path d="M1340 950C1410 950 1390 856 1460 856" stroke="#ee7a1c" strokeWidth="2.500" />
      <g stroke="#9a1414" strokeWidth="2.500">
        <path d="M1475 1379C1530 1379 1525 1362 1580 1362" />
        <path d="M2000 1379C2060 1379 2060 1362 2120 1362" />
        <path d="M1820 1659L1900 1662" />
      </g>
    </svg>
  );
}

function GraphCanvas() {
  return (
    <div className="absolute -top-[401px] -left-[484px]">
      <Comment place="top-[637px] left-[1018px] h-[560px] w-[1552px]" text="BeginPlay (Spawn the character axe and attach)" />
      <Comment place="top-[1217px] left-[918px] h-[708px] w-[2157px]" text="Throw the axe action logic" />
      <Bubble place="top-[548px] left-[1018px] w-[755px]" text="BeginPlay (Spawn the character axe and attach)" />
      <Bubble place="top-[1128px] left-[918px] w-[435px]" text="Throw the axe action logic" />
      <Wires />

      <Node
        place="top-[717px] left-[1119px] h-[73px] w-[211px]" tone="red" icon={<EventGlyph />} title="Evento BeginPlay"
        corner={<span className="mt-1.5 mr-1.5 h-3.5 w-3.5 rounded-sm border-3 border-[#ff4040] bg-[#300]" />}
      >
        <Row right={<Exec />} />
      </Node>

      <Node place="top-[877px] left-[1079px] h-[97px] w-[271px]" tone="green" icon={<ScriptF className="h-5 w-[18px]" color="#8fe08f" />} title="GetActorTransform" subtitle="Target is Actor">
        <Row
          left={<><Pin color="blue" open /><SelfField label="Alvo" /></>}
          right={<><span className={pinText}>Return Value</span><Pin color="orange" /></>}
        />
      </Node>

      <Node
        place="top-[717px] left-[1439px] h-[277px] w-[418px]" tone="blue" title="SpawnActor Kratos Axe BP"
        icon={<svg viewBox="0 0 20 20" className="h-5 w-5"><circle cx="9" cy="11" r="8" fill="url(#greyball)" /><path d="M15 0l1 4 4 1-4 1-1 4-1-4-4-1 4-1z" fill="#fff" /></svg>}
      >
        <Row left={<Exec />} right={<Exec />} />
        <Row
          height="h-[54px]"
          left={<>
            <Pin color="violet" open />
            <div className={`flex flex-col ${pinText}`}>
              Class
              <div className="flex items-center gap-1 pl-2">
                <button className="flex h-[21px] items-center gap-1 rounded bg-[#383938] px-1 text-[13px] leading-4 text-[#8c8c8c]">Kratos Axe BP<Down className="h-1.5 w-2.5" /></button>
                <svg viewBox="0 0 16 14" className="h-3.5 w-4"><path d="M0 7l7-7v4h8v6H7v4z" fill="#505150" /></svg>
                <SearchGlyph className="h-4 w-4" stroke="#505150" />
              </div>
            </div>
          </>}
          right={<><span className={pinText}>Return Value</span><Pin color="blue" /></>}
        />
        <Row left={<><Pin color="orange" /><span className={pinText}>Spawn Transform</span></>} />
        <Row height="h-[58px]" left={<><Pin color="teal" open /><Field label="Collision Handling Override"><NodeSelect value="Default" /></Field></>} />
        <Row height="h-[38px]" left={<><Pin color="blue" open /><span className={pinText}>Instigator</span></>} />
        <button aria-label="Expandir" className="mx-auto mt-1 block text-[#cfcfcf]"><Down className="h-2.5 w-3.5" /></button>
      </Node>

      <SetNode place="top-[737px] left-[1918px] h-[87px] w-[172px]" tone="blue" name="Axe Ref" />
      <VarNode place="top-[857px] left-[1918px] w-[165px]" tone="blue" name="Mesh" />

      <Node place="top-[697px] left-[2178px] h-[456px] w-[327px]" tone="blue" icon={<ScriptF className="h-5 w-[18px]" color="#6db7f0" />} title="AttachToComponent" subtitle="Target is Actor">
        <Row left={<Exec />} right={<Exec open />} />
        <Row left={<><Pin color="blue" /><span className={pinText}>Alvo</span></>} />
        <Row left={<><Pin color="blue" /><span className={pinText}>Parent</span></>} />
        <Row
          height="h-[53px]"
          left={<>
            <Pin color="purple" open />
            <Field label="Socket Name">
              <input defaultValue="hand_rSocket" className="block h-[23px] w-[107px] rounded-xs border border-[#c8c8c8] bg-transparent text-center text-[16px] text-[#cfcfcf]" />
            </Field>
          </>}
        />
        {["Location Rule", "Rotation Rule", "Scale Rule"].map((rule) => (
          <Row key={rule} height="h-[61px]" left={<><Pin color="teal" open /><Field label={rule}><NodeSelect value="Snap to Target" /></Field></>} />
        ))}
        <Row height="h-14" left={<><Pin color="red" open /><Field label="Weld Simulated Bodies"><Check checked /></Field></>} />
      </Node>

      <Node place="top-[1277px] left-[978px] h-[141px] w-[220px]" tone="red" icon={<EventGlyph />} title="InputAction Throw">
        <Row right={<><span className={pinText}>Pressed</span><Exec /></>} />
        <Row right={<><span className={pinText}>Released</span><Exec /></>} />
        <Row right={<><span className={pinText}>Key</span><Pin color="navy" open /></>} />
      </Node>

      <VarNode place="top-[1357px] left-[1338px] w-[165px]" name="Is Aiming" />
      <Branch place="top-[1277px] left-[1558px]" />
      <VarNode place="top-[1357px] left-[1859px] w-[167px]" name="Is Carrying Axe" />
      <Branch place="top-[1277px] left-[2098px]" />
      <SetNode place="top-[1297px] left-[2418px] h-[94px] w-[234px]" name="Is Throwing" checked next={false} />
      <SetNode place="top-[1457px] left-[2418px] h-[94px] w-[221px]" name="Is Waiting" checked />
      <AxeRecall place="top-[1417px] left-[2698px]" />
      <VarNode place="top-[1637px] left-[1678px] w-[168px]" name="Is Carrying Axe" />
      <Branch place="top-[1577px] left-[1878px]" trueOpen />
      <SetNode place="top-[1637px] left-[2138px] h-[94px] w-[221px]" name="Is Waiting" checked />
      <AxeRecall place="top-[1597px] left-[2418px]" />
      <SetNode place="top-[1777px] left-[1578px] h-[94px] w-[234px]" name="Is Throwing" next={false} />
    </div>
  );
}

function GraphHeader() {
  return (
    <div className="relative flex h-[105px] items-center bg-black/58 pb-1 text-[48px] leading-[56px] text-[#a2a2a2]">
      <button aria-label="Favorito" className="flex w-[82px] justify-center">
        <svg viewBox="0 0 50 48" className="h-12 w-[50px]"><path d="M25 4l6 14 16 2-12 11 4 15-14-8-14 8 4-15L3 20l16-2z" fill="none" stroke="#c9c9c9" strokeWidth="3.500" /></svg>
      </button>
      <span className="h-[90px] w-0.5 bg-[#808080]" />
      <button aria-label="Voltar" className="flex w-[100px] justify-center">
        <svg viewBox="0 0 44 56" className="h-14 w-11"><path d="M0 28L24 0v14h18v28H24v14z" fill="#e9f7f8" /></svg>
      </button>
      <button aria-label="Avançar" className="flex w-[114px] justify-center">
        <svg viewBox="0 0 44 56" className="h-14 w-11"><path d="M44 28L20 0v14H1v28h19v14z" fill="#7b7b7b" /></svg>
      </button>
      <span className="h-[90px] w-0.5 bg-[#808080]" />
      <GraphIcon className="ml-7 h-[50px] w-[60px]" />
      <span className="ml-[35px]">ThirdPersonCharacter</span>
      <svg viewBox="0 0 22 36" className="mx-[21px] h-9 w-[22px]" aria-hidden="true"><path d="M3 2l15 16L3 34" fill="none" stroke="#c9c9c9" strokeWidth="6" /></svg>
      <span>Event Graph</span>
      <span className="mr-3.5 -mt-4 ml-auto font-['Roboto_Condensed',Roboto,sans-serif] text-[53px] font-bold text-[#424242]">Zoom -4</span>
    </div>
  );
}

function Graph() {
  return (
    <div className="min-h-0 flex-1 border-5 border-[#3e3e3e]">
      <div className="relative h-full overflow-hidden bg-[#686868]">
        <div className="absolute inset-0 bg-[image:linear-gradient(90deg,#0000001f_1px,transparent_1px),linear-gradient(#0000001f_1px,transparent_1px),linear-gradient(90deg,#ffffff12_1px,transparent_1px),linear-gradient(#ffffff12_1px,transparent_1px)] bg-size-[320px_320px,320px_320px,40px_40px,40px_40px] bg-position-[293px_75px,293px_75px,13px_35px,13px_35px]" />
        <GraphCanvas />
        <div className="pointer-events-none absolute inset-0 shadow-[inset_0_0_160px_rgba(0,0,0,0.55)]" />
        <div className="absolute inset-y-0 left-0 w-[154px] bg-black/62" />
        <GraphHeader />
        <div className="pointer-events-none absolute right-5 bottom-7 font-['Roboto_Condensed',Roboto,sans-serif] text-[160px] leading-[180px] font-bold text-white/15">ESQUEMA</div>
      </div>
    </div>
  );
}

/* ---------- results dock ---------- */

function ResultsDock() {
  const tabs = [
    { title: "Resultados do Compilador", icon: <ConsoleIcon />, tone: "bg-[#2d2d2d]" },
    { title: "Buscar Resultados", icon: <LensIcon />, tone: "bg-[#3e3e3e]" },
  ];
  return (
    <div className="mt-[13px] shrink-0">
      <div className="flex gap-0.5 pl-2.5">
        {tabs.map((t) => (
          <div key={t.title} className={`flex h-[55px] w-[375px] items-center rounded-t pb-1 pl-3.5 ${t.tone}`}>
            {t.icon}
            <span className="ml-4 w-[250px] overflow-hidden text-[30px] leading-10 whitespace-nowrap text-[#dedede] [text-shadow:2px_2px_0_#000]">{t.title}</span>
            <Cross className="ml-3.5 opacity-60" />
          </div>
        ))}
      </div>
      <div className="flex h-3.5 gap-3 bg-[#3e3e3e] pt-[5px] pr-[11px] pl-[5px]">
        <input aria-label="Buscar" className="h-9 min-w-0 flex-1 rounded-t-md bg-[#cacaca]" />
        <button aria-label="Buscar em todos" className="h-9 w-[60px] rounded-t-md border-2 border-[#222] bg-[#ececec]" />
      </div>
    </div>
  );
}

export default function App() {
  return (
    <div className="relative flex h-screen w-full flex-col overflow-hidden bg-[#222] font-[Roboto,sans-serif]">
      <Defs />
      <TitleBar />
      <MenuBar />
      <main className="flex min-h-0 flex-1 pt-[3px] pr-0.5">
        <aside className="flex w-[465px] shrink-0 flex-col gap-3.5 pl-[3px]">
          <ComponentsPanel />
          <MyBlueprint />
        </aside>
        <div className="mx-[13px] flex min-w-0 flex-1 flex-col overflow-hidden pl-px">
          <PanelTab icon={<ToolsIcon />} title="Barra de ferramentas" />
          <Toolbar />
          <GraphTabs />
          <Graph />
          <ResultsDock />
        </div>
        <aside className="flex w-[530px] shrink-0 flex-col">
          <PanelTab icon={<InfoLens />} title="Detalhes" />
          <div className="flex-1 bg-[#3e3e3e]" />
        </aside>
      </main>
      <div className="pointer-events-none absolute right-[158px] bottom-[63px] z-30 font-['Open_Sans',sans-serif] text-[#b4b4b4]/75">
        <p className="text-[48px] leading-[60px]">Ativar o Windows</p>
        <p className="text-[35px] leading-[48px]">Acesse Configurações para ativar o Windows.</p>
      </div>
    </div>
  );
}
